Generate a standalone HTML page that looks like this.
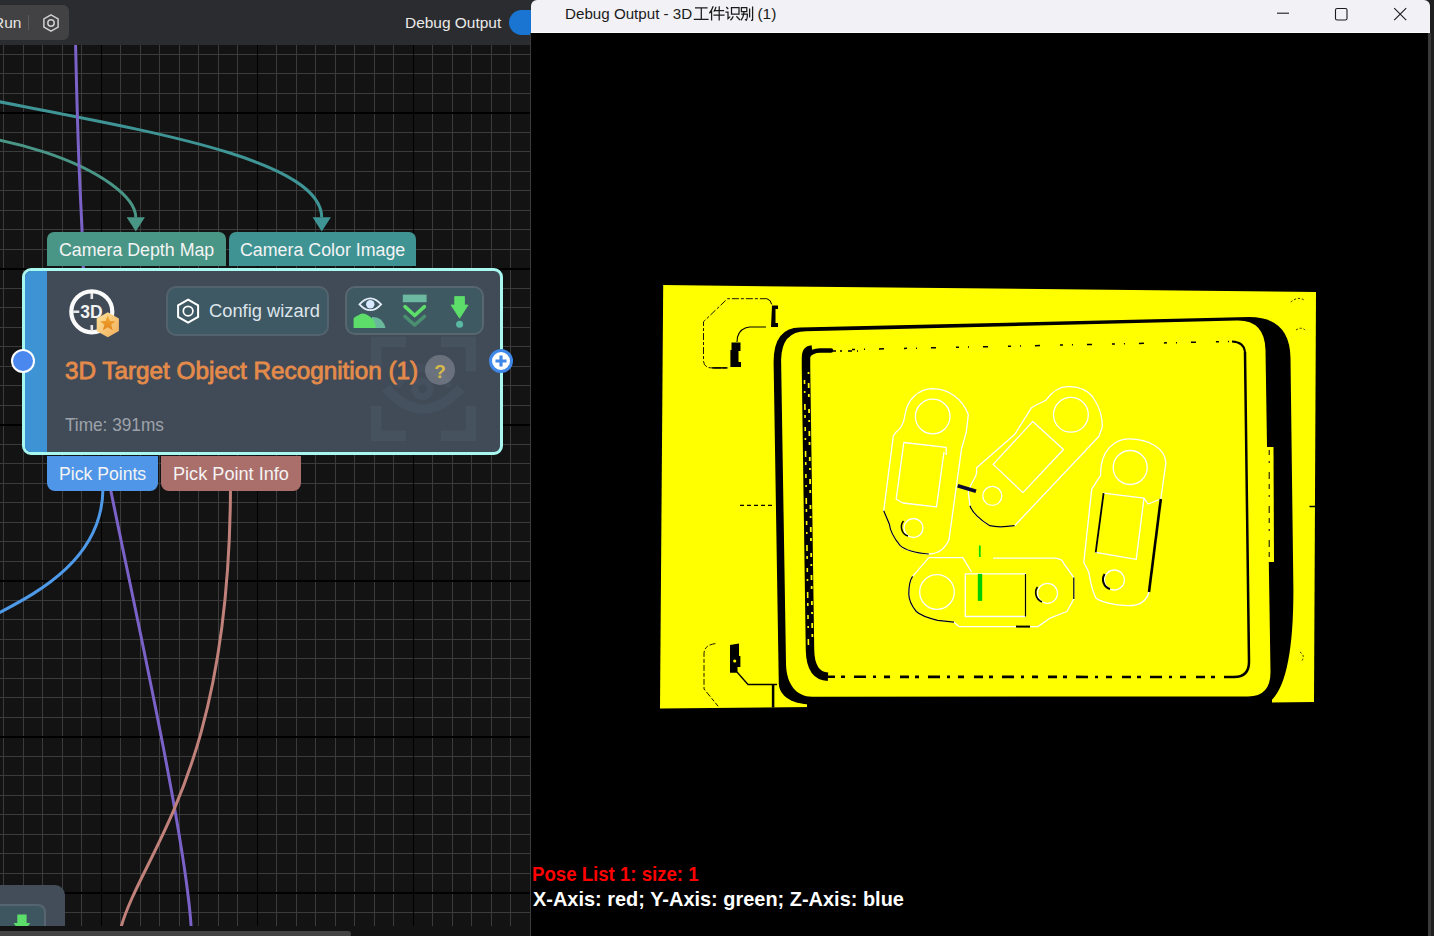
<!DOCTYPE html>
<html><head><meta charset="utf-8">
<style>
*{margin:0;padding:0;box-sizing:border-box}
html,body{width:1434px;height:936px;overflow:hidden;background:#1f1f1f;font-family:"Liberation Sans",sans-serif}
.abs{position:absolute}
.t{position:absolute;white-space:nowrap;transform-origin:0 0}
</style></head><body>
<div id="left" class="abs" style="left:0;top:0;width:531px;height:936px;background:#1e1f22;overflow:hidden">
  <div class="abs" style="left:0;top:0;width:531px;height:45px;background:#2b2c2f"></div>
  <div class="abs" style="left:-20px;top:5px;width:89px;height:35px;background:#424244;border-radius:6px"></div>
  <div class="t" id="run" style="left:-7.00px;top:14.58px;font-size:15.5px;line-height:1;font-weight:normal;color:#e6e6e6;transform:scaleX(1.0000)">Run</div>
  <div class="abs" style="left:28px;top:15px;width:1px;height:15px;background:#5a5a5a"></div>
  <svg class="abs" style="left:41px;top:13px" width="20" height="20" viewBox="0 0 20 20"><polygon points="10,1.8 17.1,5.9 17.1,14.1 10,18.2 2.9,14.1 2.9,5.9" fill="none" stroke="#d0d0d0" stroke-width="1.5"/><circle cx="10" cy="10" r="3.2" fill="none" stroke="#d0d0d0" stroke-width="1.5"/></svg>
  <div class="t" id="dbgout" style="left:404.96px;top:15.77px;font-size:14.8px;line-height:1;font-weight:normal;color:#eaeaea;transform:scaleX(1.0440)">Debug Output</div>
  <div class="abs" style="left:509px;top:9.5px;width:60px;height:25.5px;background:#1a74d2;border-radius:13px"></div>
  <svg class="abs" style="left:0;top:0" width="531" height="936">
    <rect x="0" y="45" width="531" height="881" fill="#131313"/>
    <rect x="3" y="45" width="1" height="881" fill="#3b3b3b"/>
    <rect x="23" y="45" width="1" height="881" fill="#3b3b3b"/>
    <rect x="42" y="45" width="1" height="881" fill="#3b3b3b"/>
    <rect x="62" y="45" width="1" height="881" fill="#3b3b3b"/>
    <rect x="81" y="45" width="1" height="881" fill="#3b3b3b"/>
    <rect x="120" y="45" width="1" height="881" fill="#3b3b3b"/>
    <rect x="140" y="45" width="1" height="881" fill="#3b3b3b"/>
    <rect x="159" y="45" width="1" height="881" fill="#3b3b3b"/>
    <rect x="179" y="45" width="1" height="881" fill="#3b3b3b"/>
    <rect x="198" y="45" width="1" height="881" fill="#3b3b3b"/>
    <rect x="218" y="45" width="1" height="881" fill="#3b3b3b"/>
    <rect x="237" y="45" width="1" height="881" fill="#3b3b3b"/>
    <rect x="276" y="45" width="1" height="881" fill="#3b3b3b"/>
    <rect x="296" y="45" width="1" height="881" fill="#3b3b3b"/>
    <rect x="315" y="45" width="1" height="881" fill="#3b3b3b"/>
    <rect x="335" y="45" width="1" height="881" fill="#3b3b3b"/>
    <rect x="354" y="45" width="1" height="881" fill="#3b3b3b"/>
    <rect x="374" y="45" width="1" height="881" fill="#3b3b3b"/>
    <rect x="393" y="45" width="1" height="881" fill="#3b3b3b"/>
    <rect x="432" y="45" width="1" height="881" fill="#3b3b3b"/>
    <rect x="452" y="45" width="1" height="881" fill="#3b3b3b"/>
    <rect x="471" y="45" width="1" height="881" fill="#3b3b3b"/>
    <rect x="491" y="45" width="1" height="881" fill="#3b3b3b"/>
    <rect x="510" y="45" width="1" height="881" fill="#3b3b3b"/>
    <rect x="530" y="45" width="1" height="881" fill="#3b3b3b"/>
    <rect x="0" y="54" width="531" height="1" fill="#3b3b3b"/>
    <rect x="0" y="73" width="531" height="1" fill="#3b3b3b"/>
    <rect x="0" y="93" width="531" height="1" fill="#3b3b3b"/>
    <rect x="0" y="132" width="531" height="1" fill="#3b3b3b"/>
    <rect x="0" y="151" width="531" height="1" fill="#3b3b3b"/>
    <rect x="0" y="171" width="531" height="1" fill="#3b3b3b"/>
    <rect x="0" y="190" width="531" height="1" fill="#3b3b3b"/>
    <rect x="0" y="210" width="531" height="1" fill="#3b3b3b"/>
    <rect x="0" y="229" width="531" height="1" fill="#3b3b3b"/>
    <rect x="0" y="249" width="531" height="1" fill="#3b3b3b"/>
    <rect x="0" y="288" width="531" height="1" fill="#3b3b3b"/>
    <rect x="0" y="307" width="531" height="1" fill="#3b3b3b"/>
    <rect x="0" y="327" width="531" height="1" fill="#3b3b3b"/>
    <rect x="0" y="346" width="531" height="1" fill="#3b3b3b"/>
    <rect x="0" y="366" width="531" height="1" fill="#3b3b3b"/>
    <rect x="0" y="385" width="531" height="1" fill="#3b3b3b"/>
    <rect x="0" y="405" width="531" height="1" fill="#3b3b3b"/>
    <rect x="0" y="444" width="531" height="1" fill="#3b3b3b"/>
    <rect x="0" y="463" width="531" height="1" fill="#3b3b3b"/>
    <rect x="0" y="483" width="531" height="1" fill="#3b3b3b"/>
    <rect x="0" y="502" width="531" height="1" fill="#3b3b3b"/>
    <rect x="0" y="522" width="531" height="1" fill="#3b3b3b"/>
    <rect x="0" y="541" width="531" height="1" fill="#3b3b3b"/>
    <rect x="0" y="561" width="531" height="1" fill="#3b3b3b"/>
    <rect x="0" y="600" width="531" height="1" fill="#3b3b3b"/>
    <rect x="0" y="619" width="531" height="1" fill="#3b3b3b"/>
    <rect x="0" y="639" width="531" height="1" fill="#3b3b3b"/>
    <rect x="0" y="658" width="531" height="1" fill="#3b3b3b"/>
    <rect x="0" y="678" width="531" height="1" fill="#3b3b3b"/>
    <rect x="0" y="697" width="531" height="1" fill="#3b3b3b"/>
    <rect x="0" y="717" width="531" height="1" fill="#3b3b3b"/>
    <rect x="0" y="756" width="531" height="1" fill="#3b3b3b"/>
    <rect x="0" y="775" width="531" height="1" fill="#3b3b3b"/>
    <rect x="0" y="795" width="531" height="1" fill="#3b3b3b"/>
    <rect x="0" y="814" width="531" height="1" fill="#3b3b3b"/>
    <rect x="0" y="834" width="531" height="1" fill="#3b3b3b"/>
    <rect x="0" y="853" width="531" height="1" fill="#3b3b3b"/>
    <rect x="0" y="873" width="531" height="1" fill="#3b3b3b"/>
    <rect x="0" y="912" width="531" height="1" fill="#3b3b3b"/>
    <rect x="101" y="45" width="1" height="881" fill="#000"/>
    <rect x="257" y="45" width="1" height="881" fill="#000"/>
    <rect x="413" y="45" width="1" height="881" fill="#000"/>
    <rect x="0" y="112" width="531" height="2" fill="#000"/>
    <rect x="0" y="268" width="531" height="2" fill="#000"/>
    <rect x="0" y="424" width="531" height="2" fill="#000"/>
    <rect x="0" y="580" width="531" height="2" fill="#000"/>
    <rect x="0" y="736" width="531" height="2" fill="#000"/>
    <rect x="0" y="892" width="531" height="2" fill="#000"/>
  </svg>
  <svg class="abs" style="left:0;top:0" width="531" height="936">
    <path d="M-245.7,6.8 C-245.7,104 321.7,112.6 321.7,217.5" fill="none" stroke="#3f9595" stroke-width="3"/>
    <polygon points="312.6,217.2 330.9,217.2 321.7,231.5" fill="#3f9595"/>
    <path d="M-442.8,584 C-442.8,-38 135.8,134.7 135.8,217.5" fill="none" stroke="#4a9686" stroke-width="3"/>
    <polygon points="126.6,217.2 144.9,217.2 135.8,231.5" fill="#4a9686"/>
    <path d="M75.6,45 C79.2,209.8 80.9,183.2 83.5,270" fill="none" stroke="#7b62c8" stroke-width="3"/>
    <path d="M110.5,489 C132,596.3 185.8,836.6 191.2,928" fill="none" stroke="#7b62c8" stroke-width="3"/>
    <path d="M102.9,490 C101.7,568.5 18.3,601.1 -12,619" fill="none" stroke="#4e9ae8" stroke-width="3"/>
    <path d="M230.5,489 C229,774.8 142,852.3 120.8,928" fill="none" stroke="#c0817a" stroke-width="3"/>
  </svg>
  <!-- bottom strip -->
  <div class="abs" style="left:0;top:926px;width:531px;height:10px;background:#131313"></div>
  <div class="abs" style="left:-5px;top:931px;width:356px;height:6px;background:#434343;border-radius:3px"></div>
  <!-- bottom-left partial node -->
  <div class="abs" style="left:-40px;top:885px;width:105px;height:41px;background:#434d59;border-radius:10px 10px 0 0"></div>
  <div class="abs" style="left:-20px;top:904px;width:66px;height:22px;background:#3e5660;border:2px solid #56656f;border-bottom:none;border-radius:8px 8px 0 0"></div>
  <svg class="abs" style="left:0px;top:905px" width="46" height="21" viewBox="0 905 46 21"><path d="M17.3,914.5 H26.6 V923 H30.2 L21.9,935 L13.6,923 H17.3 Z" fill="#5ddd6a"/></svg>
  <!-- port labels -->
  <div class="abs" style="left:47px;top:231.5px;width:179px;height:34.5px;background:#4a9686;border-radius:7px 7px 0 0"></div>
  <div class="abs" style="left:229px;top:231.5px;width:187px;height:34.5px;background:#3f9393;border-radius:7px 7px 0 0"></div>
  <div class="t" id="lbl1" style="left:58.91px;top:240.76px;font-size:18px;line-height:1;font-weight:normal;color:#f4f4f4;transform:scaleX(0.9884)">Camera Depth Map</div>
  <div class="t" id="lbl2" style="left:239.61px;top:240.86px;font-size:18px;line-height:1;font-weight:normal;color:#f4f4f4;transform:scaleX(0.9891)">Camera Color Image</div>
  <div class="abs" style="left:47px;top:456px;width:111px;height:35px;background:#5096e8;border-radius:0 0 8px 8px"></div>
  <div class="abs" style="left:161px;top:456px;width:139.5px;height:35px;background:#ab6f6b;border-radius:0 0 8px 8px"></div>
  <div class="t" id="lbl3" style="left:59.16px;top:465.49px;font-size:18.8px;line-height:1;font-weight:normal;color:#f4f4f4;transform:scaleX(0.9385)">Pick Points</div>
  <div class="t" id="lbl4" style="left:173.13px;top:465.49px;font-size:18.8px;line-height:1;font-weight:normal;color:#f4f4f4;transform:scaleX(0.9653)">Pick Point Info</div>
  <!-- node -->
  <div class="abs" style="left:21.5px;top:267.5px;width:481.5px;height:187.5px;background:#414b58;border:3px solid #a8f8f0;border-radius:9px;overflow:hidden">
    <div class="abs" style="left:0;top:0;width:22.5px;height:100%;background:#3d93d3"></div>
  </div>
  <!-- watermark -->
  <svg class="abs" style="left:360px;top:330px" width="125" height="120" viewBox="360 330 125 120">
    <path d="M376.25,371.4 V341.65 H406 M441,341.65 H470.75 V371.4 M470.75,406 V435.85 H441 M406,435.85 H376.25 V406" fill="none" stroke="#47525f" stroke-width="10.5"/>
    <path d="M386,388 Q423,430 461,388" fill="none" stroke="#46515f" stroke-width="10"/>
    <path d="M398,384 Q423,352 448,384" fill="none" stroke="#444f5c" stroke-width="8" stroke-linecap="round"/>
    <circle cx="422.6" cy="388.9" r="7.6" fill="none" stroke="#46515f" stroke-width="7"/>
  </svg>
  <!-- 3D icon -->
  <svg class="abs" style="left:62px;top:282px" width="64" height="60" viewBox="62 282 64 60">
    <circle cx="91.8" cy="311.8" r="20.5" fill="none" stroke="#fafafa" stroke-width="4.2"/>
    <path d="M91.8,293 V299 M73.3,311.8 H79.3 M91.8,325 V330" stroke="#e8e8e8" stroke-width="2.6"/>
    <text x="80.3" y="318.3" font-family="Liberation Sans" font-weight="bold" font-size="17.5" fill="#f2f2f2">3D</text>
    <defs><linearGradient id="hx" x1="0" y1="0" x2="1" y2="1"><stop offset="0" stop-color="#fde39a"/><stop offset="1" stop-color="#f2ad5a"/></linearGradient>
    <linearGradient id="st" x1="0" y1="0" x2="0" y2="1"><stop offset="0" stop-color="#f0a830"/><stop offset="1" stop-color="#e38520"/></linearGradient></defs>
    <polygon points="107.8,312.2 118.9,318.5 118.9,331 107.8,337.3 96.7,331 96.7,318.5" fill="url(#hx)"/>
    <polygon points="107.8,315.6 110,321 115.5,321.3 111.2,324.8 112.7,330.3 107.8,327.2 102.9,330.3 104.4,324.8 100.1,321.3 105.6,321" fill="url(#st)"/>
  </svg>
  <!-- config wizard -->
  <div class="abs" style="left:166px;top:285.6px;width:163px;height:50.4px;background:#3e5964;border:2px solid #53636d;border-radius:10px"></div>
  <svg class="abs" style="left:174px;top:296px" width="28" height="30" viewBox="174 296 28 30">
    <polygon points="188.1,299.6 198.1,305.4 198.1,316.8 188.1,322.6 178.1,316.8 178.1,305.4" fill="none" stroke="#ffffff" stroke-width="2"/>
    <circle cx="188.1" cy="311.1" r="4.8" fill="none" stroke="#ffffff" stroke-width="1.7"/>
  </svg>
  <div class="t" id="cfg" style="left:209.22px;top:301.79px;font-size:18.8px;line-height:1;font-weight:normal;color:#dde4ea;transform:scaleX(0.9750)">Config wizard</div>
  <!-- icon group -->
  <div class="abs" style="left:344.7px;top:285.8px;width:139.7px;height:49.6px;background:#3e5962;border:2px solid #57666f;border-radius:10px"></div>
  <svg class="abs" style="left:345px;top:286px" width="140" height="50" viewBox="345 286 140 50">
    <path d="M359.5,304.3 Q370.3,292.5 381.1,304.3 Q370.3,316.1 359.5,304.3 Z" fill="none" stroke="#e4eef8" stroke-width="1.8"/>
    <circle cx="370.3" cy="304.3" r="4.2" fill="#d8e8ff"/>
    <path d="M372,317 Q377.5,316.6 381,319.8 Q384.5,323.2 385.5,328.1 H371 Z" fill="#6ab89c"/>
    <path d="M353.6,328.1 V318.5 Q354,317 358,315.5 L361,313.8 Q363,313 365.5,314 Q371.5,317 374,321 Q375.7,324.5 376,328.1 Z" fill="#5ddd6a"/>
    <rect x="402.8" y="294.6" width="23.8" height="7.6" fill="#6cb8a0"/>
    <path d="M405,306.7 L414.7,315.5 L424.4,306.7" fill="none" stroke="#5ddd6a" stroke-width="3.6" stroke-linecap="round" stroke-linejoin="round"/>
    <path d="M405,316.5 L414.7,325 L424.4,316.5" fill="none" stroke="#4a9070" stroke-width="3.6" stroke-linecap="round" stroke-linejoin="round"/>
    <path d="M454.7,296.5 H464.5 V305 H468.1 L459.6,318.2 L451,305 H454.7 Z" fill="#5ddd6a" stroke="#5ddd6a" stroke-width="0.8" stroke-linejoin="round"/>
    <circle cx="459.6" cy="324.3" r="3.5" fill="#5ab8a2"/>
  </svg>
  <!-- title -->
  <div class="t" id="title" style="left:65.20px;top:359.41px;font-size:24.2px;line-height:1;font-weight:normal;color:#e58b4a;-webkit-text-stroke:0.8px #e58b4a;transform:scaleX(1.0040)">3D Target Object Recognition (1)</div>
  <div class="abs" style="left:425px;top:355px;width:30px;height:30px;border-radius:50%;background:rgba(140,145,155,0.55)"></div>
  <div class="t" id="q" style="left:434.3px;top:361.6px;font-size:19px;line-height:1;font-weight:bold;color:#d6b94a">?</div>
  <div class="t" id="time" style="left:65.20px;top:415.96px;font-size:18.6px;line-height:1;font-weight:normal;color:#9ea3aa;transform:scaleX(0.9255)">Time: 391ms</div>
  <!-- ports -->
  <div class="abs" style="left:11px;top:349.3px;width:24px;height:24px;border-radius:50%;background:#4a88f0;border:2.6px solid #ffffff"></div>
  <div class="abs" style="left:489.4px;top:349.1px;width:24px;height:24px;border-radius:50%;background:#ffffff;border:3px solid #3f88e8"></div>
  <svg class="abs" style="left:489.4px;top:349.1px" width="24" height="24"><path d="M12,6.5 V17.5 M6.5,12 H17.5" stroke="#3f88e8" stroke-width="3.2"/></svg>


</div>
<!-- debug window -->
<div class="abs" style="left:531px;top:0;width:12px;height:12px;background:#2b2c2f"></div>
<div class="abs" style="left:530px;top:33px;width:1px;height:903px;background:#3b3b3b"></div>
<div class="abs" style="left:531px;top:0;width:899px;height:33px;background:#f2f1f5;border-radius:6px 6px 0 0"></div>
<div class="abs" style="left:531px;top:32px;width:899px;height:1px;background:#fafafa"></div>
<div class="abs" style="left:531px;top:33px;width:897px;height:903px;background:#000"></div>
<div class="abs" style="left:1428px;top:33px;width:3px;height:903px;background:#3a3a3a"></div>
<div class="t" id="wtitle" style="left:565.2px;top:6.1px;font-size:15.5px;line-height:1;color:#1b1b1b;transform:scaleX(0.978)">Debug Output - 3D</div>
<div class="t" id="wt2" style="left:757.4px;top:6.1px;font-size:15.5px;line-height:1;color:#1b1b1b">(1)</div>
<svg class="abs" style="left:690px;top:3px" width="68" height="22" viewBox="690 3 68 22">
  <g fill="none" stroke="#1b1b1b" stroke-width="1.25" stroke-linecap="butt">
    <path d="M695,7.8 H707.6 M701.3,7.8 V19.3 M693.8,19.3 H708.6"/>
    <path d="M713.2,6.3 Q712,10 709.4,13.3 M711.6,10.8 V20.6 M716,6.8 Q715.3,9.5 713.8,11.6 M714.6,10.6 H724.2 M713.4,15.2 H724.6 M719.2,6.3 V20.6"/>
    <path d="M726.3,7 L728.2,9 M725.4,12.2 H728 V18.6 L730.2,16.6 M731.5,7.6 H739 V14.2 H731.5 Z M733.2,16.2 Q732.4,18.6 730.4,20.2 M736.4,16.2 Q738.4,18.2 740,20"/>
    <path d="M741.4,7.6 H746.8 V11.6 H741.4 Z M741.2,14 H747.4 Q747.4,18.5 746.4,20.2 L745,19.4 M744,12 Q743.5,17.5 740.8,20.4 M749.6,8.6 V17.4 M752.6,6.4 V19.8 Q752.6,20.6 751,20.2"/>
  </g>
</svg>
<svg class="abs" style="left:1270px;top:0" width="150" height="33" viewBox="1270 0 150 33">
  <path d="M1277,13.2 H1289" stroke="#1b1b1b" stroke-width="1.1"/>
  <rect x="1335.5" y="8.5" width="11.5" height="11.5" rx="1.6" fill="none" stroke="#1b1b1b" stroke-width="1.1"/>
  <path d="M1394.2,8.2 L1406.2,20.2 M1406.2,8.2 L1394.2,20.2" stroke="#1b1b1b" stroke-width="1.1"/>
</svg>
<svg class="abs" style="left:531px;top:33px" width="897" height="903" viewBox="531 33 897 903">
  <polygon points="663.2,285.1 1316,292 1314,702 660,708.5" fill="#ffff00"/>
  <!-- outer black tray band -->
  <path d="M807,704.2 C792,703.5 779.5,696 778.8,684 L773.6,362 Q773.6,327.7 800,327.5 L1249,317 Q1290,317 1290.5,358 L1293.4,590 Q1293.4,678 1272,699.7 L1272,730 L807,730 Z" fill="#000"/>
  <!-- mid yellow band -->
  <path d="M781.1,360 Q781.5,331.5 806,331.3 L1237,320.6 Q1264.6,320 1265.5,350 L1270.5,672 Q1270.5,696.5 1248,696.5 L812,696.7 C797,696.7 786.5,685 786,664 Z" fill="#ffff00"/>
  <!-- inner floor outline -->
  <path d="M1245,352 L1249,662 Q1249,677 1234,677" fill="none" stroke="#000" stroke-width="2.5"/>
  <path d="M808,356 Q812,350.5 820,350.5 L831,350.5" fill="none" stroke="#000" stroke-width="4.5" stroke-linecap="round"/>
  <path d="M833,351 H858" stroke="#000" stroke-width="1.5" stroke-dasharray="3 4 2 6 4 5"/>
  <path d="M852,349.5 L1232,341.5" stroke="#000" stroke-width="1.5" stroke-dasharray="3 9 1 14 5 20"/>
  <path d="M1232,341.5 Q1244,342 1245,352" fill="none" stroke="#000" stroke-width="2"/>
  <path d="M806,358 Q806,350 812,349.5 M806,358 L806,368 L810,650 Q810.5,676 828,676.8" fill="none" stroke="#000" stroke-width="8.5"/>
  <path d="M804.5,380 L808.5,650" fill="none" stroke="#ffff00" stroke-width="1.6" stroke-dasharray="4 7 2 11 6 5 3 9"/>
  <path d="M808.5,372 L812.5,645" fill="none" stroke="#ffff00" stroke-width="1.8" stroke-dasharray="2 9 5 6 3 12 4 7"/>
  <path d="M826,676.8 L1234,677" stroke="#000" stroke-width="2.6" stroke-dasharray="9 6 4 9 12 7 3 8 6 10"/>
  <!-- side details -->
  <path d="M1265.5,447 H1273.5 L1274,562 H1268 Z" fill="#ffff00"/>
  <path d="M1269.2,450 V560" stroke="#000" stroke-width="1" stroke-dasharray="5 6 2 9 7 5"/>
  <path d="M1309.5,506.5 H1315.5" stroke="#000" stroke-width="1.5"/>
  <!-- upper-left bracket -->
  <path d="M766.9,298.7 H727.5 L703.5,321.7 V361.2 Q704,367.9 712,367.9 H727.5" fill="none" stroke="#000" stroke-width="0.9" stroke-dasharray="7 2 3 2"/>
  <path d="M766.9,298.7 Q771,300 771.7,304.4" fill="none" stroke="#000" stroke-width="1"/>
  <path d="M772,305.5 H778 V309 H775.5 V323 H778 V327 H771 Z" fill="#000"/>
  <path d="M766,327 H749.6 Q740,328 737.5,337 L737,342" fill="none" stroke="#000" stroke-width="1.1"/>
  <path d="M731.5,342.4 H740.5 V351 H738.5 V362 H741 V367 H730.4 V350 H731.5 Z" fill="#000"/>
  <path d="M712,367.9 H727.5" stroke="#000" stroke-width="1.5"/>
  <!-- lower-left bracket -->
  <path d="M715.4,643.6 Q704,645 704,654 V689 L718.2,706.3" fill="none" stroke="#000" stroke-width="0.9" stroke-dasharray="6 2 4 2"/>
  <path d="M730,645 L739,643.6 V656 H740.4 V667 H737.5 V672.7 H730 Z" fill="#000"/>
  <circle cx="734.7" cy="661" r="1.6" fill="#ffff00"/>
  <path d="M737,672 L748,684.5 H777" fill="none" stroke="#000" stroke-width="1.3"/>
  <path d="M773.1,685 V707.5" stroke="#000" stroke-width="2.5"/>
  <path d="M1290.8,302 Q1298,296 1304,300 M1296,330 Q1302,326 1306,331 M1300,652 Q1306,656 1301,662" fill="none" stroke="#000" stroke-width="0.8" stroke-dasharray="2 2"/>
  <!-- objects -->
  <g fill="none" stroke="#ffffff" stroke-width="1.3" stroke-linejoin="round">
    <!-- obj1 -->
    <path d="M896.2,431.9 C902,428 904,422 905,415 C907,400 918,389 932.7,388.7 C948,389 962,398 968.3,414.6 L966.3,431.9 L961.5,449.2 L949,539.6 C945,549 938,554 928.8,554 C915,553 905,550 900,545.4 C894,538 890,530 889.4,524.2 L883.7,510.8 L893.3,435.8 Z"/>
    <circle cx="932.7" cy="416.5" r="17.3"/>
    <circle cx="913.5" cy="528" r="9.5"/>
    <path d="M946.2,455 L946.2,447.3 L903.8,442.5 L896.2,499.2 L902.9,503 L936.5,506.9 L944,452"/>
    <!-- obj2 -->
    <path d="M1031.2,408.1 C1036,404 1042,403 1046.1,399.9 C1052,392 1058,386.6 1067.6,386.6 C1080,386 1090,392 1094,399 C1100,408 1102.4,418 1102.4,426.4 L1099,436.3 L1014.6,525.7 C1005,527 995,527 989.8,525.7 C980,520 972,512 970,505.8 L968.3,492.6 C970,484 976,478 976.6,472.7 L976.6,467.7 L1014.6,434.6 Z"/>
    <circle cx="1070.9" cy="414.8" r="17.4"/>
    <circle cx="992.3" cy="495.9" r="9.5"/>
    <path d="M1032.8,421.4 L1063.5,449.5 L1022.9,492.6 L993.1,464.4 Z"/>
    <!-- obj3 -->
    <path d="M1100.6,475.4 C1100,450 1115,439 1129.2,438.9 C1148,439 1166,448 1165.8,463.6 L1160.8,499 L1149,592 C1146,603 1137,606 1127.3,605.7 C1115,605 1100,602 1095.7,597.8 C1092,590 1090,580 1088.8,572.2 L1083.8,562.3 L1091.7,489.2 Z"/>
    <circle cx="1130.2" cy="467.5" r="17"/>
    <circle cx="1114.4" cy="580" r="10"/>
    <path d="M1103.6,493.2 L1144,498.1 L1136.2,559.3 L1095.7,552.4 Z M1144,498.1 L1148,504 L1160.8,499"/>
    <!-- obj4 -->
    <path d="M928.9,557.6 H962.8 L971.5,572 M992.9,558.2 H1055.6 C1060,559 1063,561 1063.2,562.6 L1073.8,577.6 V599 L1067,611.5 L1050.6,617.8 L1038,626.6 H959 L954,622.2 L937.7,620.3 C928,618 920,615 916.3,611.5 C911,605 908.8,600 908.8,594 C908.8,588 910,580 912.6,576.4 L928.9,557.6"/>
    <circle cx="937" cy="592" r="17.3"/>
    <circle cx="1047.5" cy="593.3" r="10"/>
    <path d="M965.3,573.9 H1025.5 V616.5 H965.3 Z"/>
  </g>
  <g fill="none" stroke="#000" stroke-width="1.2">
    <path d="M1160.8,499 L1149,592" stroke-width="2.6"/>
    <path d="M1103.6,493.2 L1095.7,552.4" stroke-width="1.8"/>
    <path d="M1104.6,574 A10,10 0 0 0 1110,589" stroke-width="2"/>
    <path d="M903.5,521 A9.5,9.5 0 0 0 908,536" stroke-width="1.5"/>
    <path d="M883.7,510.8 L889.4,524.2 C890,530 894,538 900,545.4 C905,550 915,553 928.8,554"/>
    <path d="M1073.8,577.6 V599 M1025.5,573.9 V616.5"/>
    <path d="M912.6,576.4 C910,580 908.8,588 908.8,594 C908.8,600 911,605 916.3,611.5 C920,615 928,618 937.7,620.3 L954,622.2" />
    <path d="M1037.5,587 A10,10 0 0 0 1042,602" stroke-width="1.6"/>
    <path d="M970,505.8 C972,512 980,520 989.8,525.7 C995,527 1005,527 1014.6,525.7"/>
    <path d="M1016,626.6 H1030" stroke-width="2"/>
      </g>
  <!-- axes -->
  <path d="M957.7,485.8 L976,491.2" stroke="#0a0a30" stroke-width="3.8"/>
  <path d="M979.8,545.5 L979.8,557" stroke="#00dd00" stroke-width="1.8"/>
  <path d="M980,573.9 V600.9" stroke="#00d000" stroke-width="4.4"/>
  <!-- dashed left -->
  <path d="M740,505.4 H773" stroke="#000" stroke-width="1.2" stroke-dasharray="4 3"/>
</svg>
<div class="t" id="pose" style="left:531.89px;top:864.25px;font-size:20.5px;line-height:1;font-weight:bold;color:#ff0000;transform:scaleX(0.9082)">Pose List 1: size: 1</div>
<div class="t" id="axes" style="left:532.80px;top:888.59px;font-size:20.8px;line-height:1;font-weight:bold;color:#ffffff;transform:scaleX(0.9591)">X-Axis: red; Y-Axis: green; Z-Axis: blue</div>
</body></html>
